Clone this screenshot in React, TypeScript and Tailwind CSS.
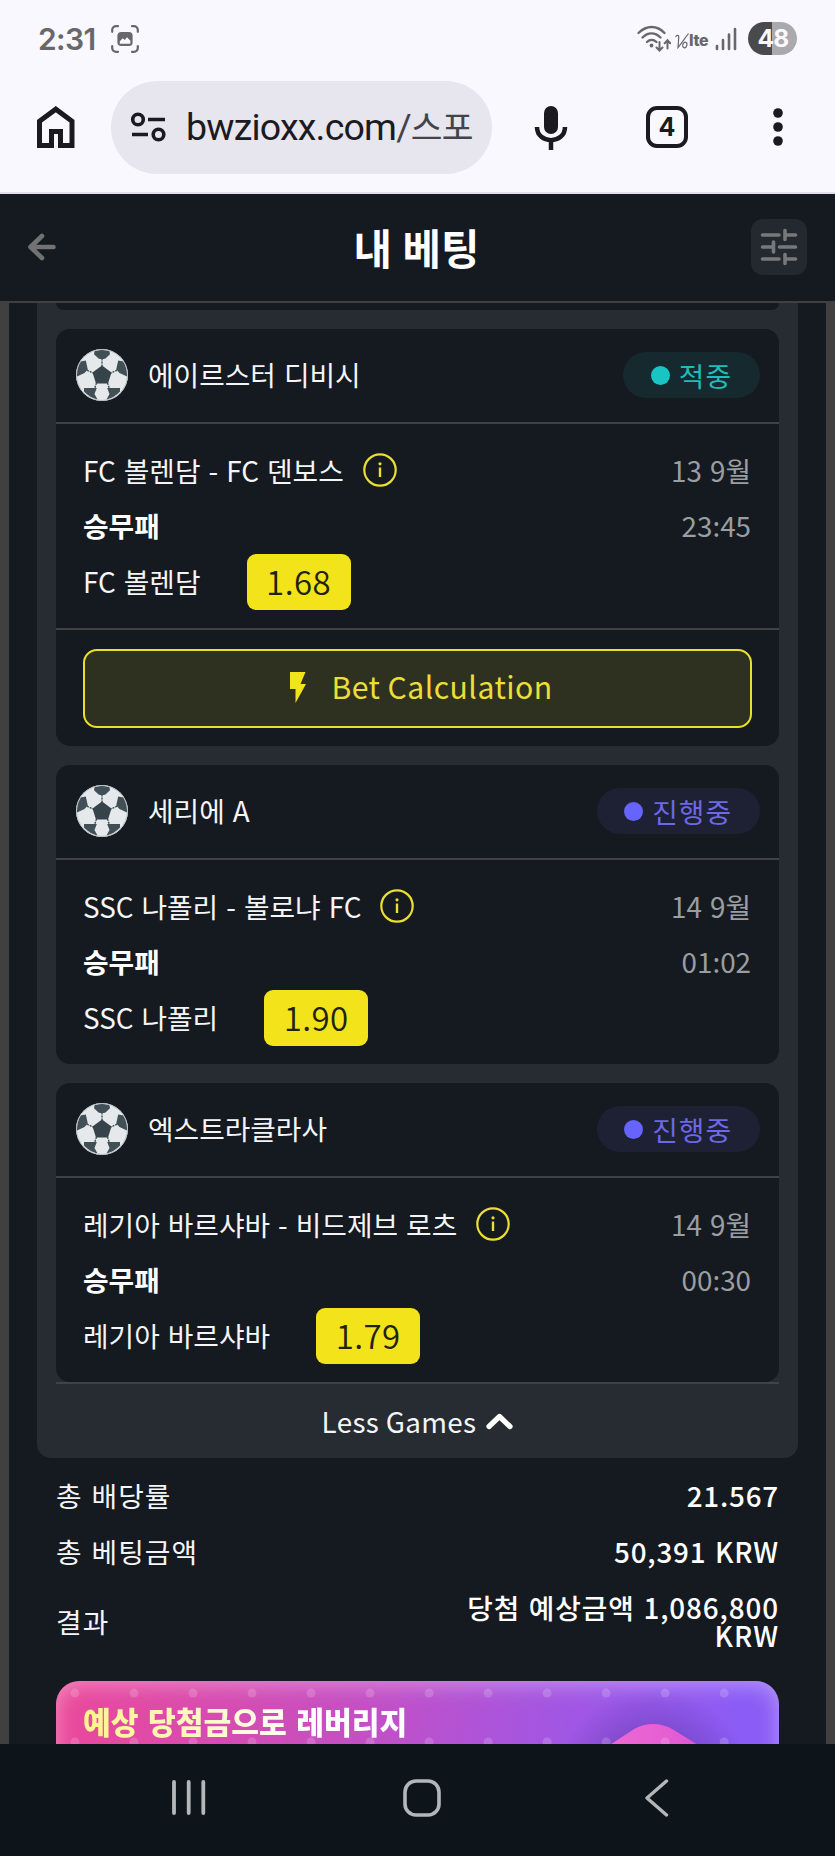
import React from "react";

type Status = "won" | "live";

interface Game {
  league: string;
  status: Status;
  match: string;
  pick: string;
  odds: string;
  date: string;
  time: string;
  calc?: boolean;
}

const games: Game[] = [
  { league: "에이르스터 디비시", status: "won", match: "FC 볼렌담 - FC 덴보스", pick: "FC 볼렌담", odds: "1.68", date: "13 9월", time: "23:45", calc: true },
  { league: "세리에 A", status: "live", match: "SSC 나폴리 - 볼로냐 FC", pick: "SSC 나폴리", odds: "1.90", date: "14 9월", time: "01:02" },
  { league: "엑스트라클라사", status: "live", match: "레기아 바르샤바 - 비드제브 로츠", pick: "레기아 바르샤바", odds: "1.79", date: "14 9월", time: "00:30" },
];

function StatusBar() {
  return (
    <div className="flex h-[79px] shrink-0 items-center pb-[2px] pl-[38px] pr-[38px] text-[#68686c]">
      <span className="w-[73px] whitespace-nowrap font-['Inter'] text-[30px] font-semibold leading-[38px] tracking-[-0.6px]">2:31</span>
      <svg className="h-[28px] w-[28px]" viewBox="0 0 28 28" fill="none" stroke="currentColor" strokeWidth="2.2" strokeLinecap="round">
        <path d="M1.200 6.800V5a3.800 3.800 0 0 1 3.800-3.800h2M21 1.200h2A3.800 3.800 0 0 1 26.800 5v1.800M26.800 21v2a3.800 3.800 0 0 1-3.800 3.800h-2M7 26.800H5A3.800 3.800 0 0 1 1.200 23v-2" />
        <rect x="7.500" y="8" width="13" height="12" rx="2.500" fill="currentColor" />
        <path d="M8.800 18.700v-2.400l3-3 2 1.800 2.200-2.800 3.400 3.500v2.900z" fill="#f9f8fe" stroke="none" />
      </svg>
      <div className="ml-auto flex items-center">
        <svg className="mr-[4px] h-[27px] w-[34px]" viewBox="0 0 34 27" fill="none" stroke="currentColor" strokeWidth="2.300" strokeLinecap="round">
          <path d="M1.500 8c8-8 18.500-8 26 0M5.500 12.500c5.500-5.500 12.500-5.500 18 0M10 17c2.800-2.800 6.500-2.800 9.500 0" />
          <circle cx="14.500" cy="20.500" r="1.900" fill="currentColor" stroke="none" />
          <path d="M22.500 17v8M19.500 22.500l3 3 3-3M30.500 23.500v-8M27.700 18.200l2.800-3 2.800 3" strokeWidth="2" />
        </svg>
        <span className="flex h-[20px] w-[40px] items-end whitespace-nowrap leading-[18px]">
          <svg className="h-[16px] w-[14px] shrink-0" viewBox="0 0 14 16" fill="none" stroke="currentColor" strokeWidth="1.200" strokeLinecap="round">
            <path d="M.8 3.500C2 2 3.800 2 3.800 4L3 14.500C6 11 10 5 13.200 1" />
            <ellipse cx="9.800" cy="12" rx="2" ry="2.800" transform="rotate(20 9.800 12)" />
          </svg>
          <span className="font-['Inter'] text-[16px] font-extrabold leading-[17px] tracking-[-0.300px]">lte</span>
        </span>
        <svg className="h-[24px] w-[22px]" viewBox="0 0 22 24" stroke="currentColor" strokeWidth="2.600" strokeLinecap="round">
          <path d="M2 19v3M8 13v9M14 7.500V22M20 2v20" />
        </svg>
        <span className="ml-[11px] flex h-[33px] w-[49px] items-center justify-center rounded-full bg-[linear-gradient(to_right,#4a4a4d_48%,#aaa9ae_48%)] pl-[1px] font-['Inter'] text-[24.500px] font-bold leading-[33px] tracking-[-0.8px] text-[#f9f8fe]">48</span>
      </div>
    </div>
  );
}

function BrowserBar() {
  return (
    <div className="flex h-[115px] shrink-0 border-b-2 border-[#e1e0eb] text-[#1b1a20]">
      <div className="flex h-[96px] w-full items-center pl-[37px]">
        <svg className="h-[42px] w-[38px]" viewBox="0 0 38 42" fill="none" stroke="currentColor" strokeWidth="5">
          <path d="M2.500 15.200 18.800 3.200 35 15.200V39.500H23.500V25.500H14.500V39.500H2.500z" />
        </svg>
        <div className="ml-[36px] flex h-[93px] w-[381px] items-center overflow-hidden rounded-full bg-[#e7e5ee] pl-[19px]">
          <svg className="h-[30px] w-[37px] shrink-0" viewBox="0 0 37 30" fill="none" stroke="currentColor" strokeWidth="3.600">
            <circle cx="8" cy="7.500" r="5.300" />
            <path d="M18 7.500H35M2 22.500H18" />
            <circle cx="28.500" cy="22.500" r="5.300" />
          </svg>
          <span className="ml-[19px] whitespace-nowrap font-['Roboto','Noto_Sans_CJK_KR',sans-serif] text-[37.500px] leading-[46px] tracking-[-0.800px]">
            bwzioxx.com<span className="text-[#44434b]">/<span className="text-[34.500px]">스포</span></span>
          </span>
        </div>
        <svg className="ml-[42px] h-[45px] w-[34px]" viewBox="0 0 34 45" fill="none" stroke="currentColor" strokeWidth="4.500">
          <rect x="10" y="1" width="14" height="28" rx="7" fill="currentColor" stroke="none" />
          <path d="M3 22c0 17.500 28 17.500 28 0M17 34v11" />
        </svg>
        <div className="ml-[78px] flex h-[42px] w-[42px] items-center justify-center rounded-[11px] border-[4.500px] border-current font-['Inter'] text-[25px] font-bold leading-none">4</div>
        <svg className="ml-[85px] h-[40px] w-[10px] overflow-visible" viewBox="0 0 10 40" fill="currentColor">
          <circle cx="5" cy="6" r="4.800" />
          <circle cx="5" cy="20" r="4.800" />
          <circle cx="5" cy="34" r="4.800" />
        </svg>
      </div>
    </div>
  );
}

function PageHeader() {
  return (
    <header className="flex h-[109px] shrink-0 items-center justify-between border-b-2 border-[#404040] bg-[#151a20] pb-[2px] pl-[27px] pr-[28px]">
      <svg className="mr-[25px] h-[30px] w-[30px]" viewBox="0 0 30 30" fill="none" stroke="#727272" strokeWidth="4.600" strokeLinecap="round" strokeLinejoin="round">
        <path d="M26.500 15H4M15 4 3.500 15 15 26" />
      </svg>
      <h1 className="whitespace-nowrap text-[41.800px] font-bold leading-[60px] text-white [word-spacing:1px]">내 베팅</h1>
      <div className="flex h-[56px] w-[56px] items-center justify-center rounded-[12px] bg-[#24292f]">
        <svg className="h-[38px] w-[38px]" viewBox="0 0 38 38" fill="none" stroke="#77787a" strokeWidth="3.600" strokeLinecap="round">
          <path d="M2.500 7H19M25 2.500v9M25 7h10.500M2.500 19H13.500M13.500 14v10M19.500 19h16M2.500 31H19M25 26.500v9M25 31h10.500" />
        </svg>
      </div>
    </header>
  );
}

function Football() {
  return (
    <svg className="h-[52px] w-[52px] shrink-0" viewBox="0 0 52 52">
      <circle cx="26" cy="26" r="26" fill="#e5e9eb" />
      <g fill="#414f56">
        <path d="M18.500 2.200Q26-.8 33.500 2.200L34 5.300 29.500 9.500Q26 10.500 22.500 9.500L18 5.300z" />
        <path d="M26 16.500 35.500 23.500 32 34.500H20L16.500 23.500z" fill="#37434b" />
        <path d="M4.500 12.500 9.800 11.500 11.800 20.500 8.500 24 1 27.500Q.3 19 4.500 12.500z" />
        <path d="M47.500 12.500 42.200 11.500 40.200 20.500 43.500 24 51 27.500Q51.700 19 47.500 12.500z" />
        <path d="M8 39H20.800L18.500 45 21.500 50.500Q13.500 48.500 8 42.500z" />
        <path d="M44 39H31.200L33.500 45 30.500 50.500Q38.500 48.500 44 42.500z" />
      </g>
      <g stroke="#414f56" strokeWidth="1.400" strokeDasharray="2 1" fill="none">
        <path d="M26 9.500V17M11 21.200 17 24M41 21.200 35 24M20.500 34 18.500 40M31.500 34l2 6" />
      </g>
      <circle cx="26" cy="26" r="25.500" fill="none" stroke="#b7bec2" strokeWidth="1" />
    </svg>
  );
}

function Badge({ status }: { status: Status }) {
  const won = status === "won";
  return (
    <span className={won ? "flex h-[46px] items-center gap-[9px] rounded-full bg-[#16292e] pl-[28px] pr-[28px] text-[#1fbdba]" : "flex h-[46px] items-center gap-[9px] rounded-full bg-[#1e2034] pl-[27px] pr-[28px] text-[#6c68e8]"}>
      <span className={won ? "h-[19px] w-[19px] rounded-full bg-[#18c5c5]" : "h-[19px] w-[19px] rounded-full bg-[#6663ff]"} />
      <span className="text-[27.800px] leading-[46px] tracking-[1px]">{won ? "적중" : "진행중"}</span>
    </span>
  );
}

function InfoIcon() {
  return (
    <svg className="ml-[19px] h-[34px] w-[34px]" viewBox="0 0 34 34" fill="none" stroke="#eade32" strokeWidth="2.200">
      <circle cx="17" cy="17" r="15.700" />
      <path d="M17 14.500v9.500" strokeWidth="2.400" />
      <circle cx="17" cy="10.800" r="1.600" fill="#eade32" stroke="none" />
    </svg>
  );
}

function GameCard({ game }: { game: Game }) {
  return (
    <article className="rounded-[14px] bg-[#151a20] text-[27.800px] text-[#f4f5f6] [word-spacing:1.800px]">
      <div className="flex h-[95px] items-center border-b-2 border-[#404243] pb-px pl-[20px] pr-[19px]">
        <Football />
        <span className="ml-[20px] mr-auto">{game.league}</span>
        <Badge status={game.status} />
      </div>
      <div className="flex h-[204px] justify-between px-[28px] pb-[18px] pt-[18px] leading-[56px]">
        <div className="-ml-px">
          <div className="flex h-[56px] items-center">
            {game.match}
            <InfoIcon />
          </div>
          <div className="h-[56px] font-bold leading-[55px] text-white">승무패</div>
          <div className="flex h-[56px] items-center">
            <span className="h-[56px] leading-[55px]">{game.pick}</span>
            <span className="ml-[46px] h-[56px] w-[104px] rounded-[9px] bg-[#f2e31b] text-center text-[33px] font-[350] leading-[55px] tracking-[0.400px] text-[#22230f]">{game.odds}</span>
          </div>
        </div>
        <div className="text-right text-[#9b9ea1]">
          <div className="h-[56px]">{game.date}</div>
          <div className="h-[55px] leading-[55px]">{game.time}</div>
        </div>
      </div>
      {game.calc && (
        <div className="h-[118px] border-t-2 border-[#404243] px-[27px] pt-[19px]">
          <button className="flex h-[79px] w-full items-center justify-center rounded-[14px] border-2 border-[#eadf30] bg-[#2f3120] pb-[3px] pl-[8px] text-[30.200px] tracking-[0.450px] text-[#ebdf35]">
            <svg className="mr-[25px] h-[31px] w-[16px]" viewBox="0 0 16 31" fill="#f2e31b">
              <path d="M0 0H15.500L10.500 12H16L5.500 31V17H0z" />
            </svg>
            Bet Calculation
          </button>
        </div>
      )}
    </article>
  );
}

function Summary() {
  return (
    <dl className="px-[19px] pb-[2px] pt-[10px] text-[27.800px] tracking-[1.100px] text-[#f4f5f6] [word-spacing:1.500px]">
      <div className="flex h-[56px] items-center justify-between">
        <dt>총 배당률</dt>
        <dd className="font-medium tracking-[0.800px] text-white">21.567</dd>
      </div>
      <div className="flex h-[56px] items-center justify-between">
        <dt>총 베팅금액</dt>
        <dd className="font-medium tracking-[0.800px] text-white">50,391 KRW</dd>
      </div>
      <div className="flex h-[83px] items-center justify-between">
        <dt>결과</dt>
        <dd className="pb-[2px] text-right font-medium leading-[28px] tracking-[0.900px] text-white">당첨 예상금액 1,086,800<br />KRW</dd>
      </div>
    </dl>
  );
}

const dotColumns = Array.from({ length: 12 }, (_, i) => 19 + i * 59.1);

function Banner() {
  return (
    <div className="relative mx-[19px] mt-[16px] h-[180px] overflow-hidden rounded-[23px] bg-[linear-gradient(100deg,#ec4899_0%,#c050c8_45%,#a855dd_62%,#8b5cf6_92%)]">
      <svg className="absolute inset-0 h-full w-full" viewBox="0 0 724 180">
        <defs>
          <radialGradient id="glow">
            <stop offset="0.350" stopColor="#4c2a8c" stopOpacity="0.450" />
            <stop offset="1" stopColor="#4c2a8c" stopOpacity="0" />
          </radialGradient>
          <linearGradient id="gem" x1="0" x2="1">
            <stop offset="0" stopColor="#f472d0" />
            <stop offset="1" stopColor="#d94fd6" />
          </linearGradient>
        </defs>
        <circle cx="598" cy="105" r="98" fill="url(#glow)" />
        <path d="M510 93 579 48Q598 38 617 48L690 93V170H510z" fill="url(#gem)" />
        {dotColumns.map((x) => (
          <g key={x} fill="#ffffff" fillOpacity="0.170">
            <circle cx={x} cy="12" r="4.500" />
            <circle cx={x} cy="61" r="4.500" />
          </g>
        ))}
      </svg>
      <div className="absolute inset-0 rounded-[23px] shadow-[inset_0_3px_22px_rgba(255,255,255,0.38)]" />
      <p className="relative ml-[27px] mt-[18px] w-fit whitespace-nowrap bg-[linear-gradient(90deg,#fdf58a,#fff6ba_30%,#ffffff_70%)] bg-clip-text text-[30.200px] font-black leading-[44px] text-transparent [word-spacing:2.500px]">예상 당첨금으로 레버리지</p>
    </div>
  );
}

function NavBar() {
  return (
    <nav className="flex h-[112px] shrink-0 items-start bg-[#0e151a] pl-[171px] pt-[35px]">
      <svg className="h-[37px] w-[35px]" viewBox="0 0 35 37" stroke="#b3b7ba" strokeWidth="3.800" strokeLinecap="round">
        <path d="M3 3v31M17.700 3v31M32.300 3v31" />
      </svg>
      <svg className="ml-[197px] h-[38px] w-[38px]" viewBox="0 0 38 38" fill="none" stroke="#b3b7ba" strokeWidth="3.600">
        <rect x="2" y="2" width="34" height="34" rx="11" />
      </svg>
      <svg className="ml-[203px] h-[38px] w-[26px]" viewBox="0 0 26 38" fill="none" stroke="#b3b7ba" strokeWidth="3.400" strokeLinecap="round" strokeLinejoin="round">
        <path d="M22.500 2 3 19 22.500 36" />
      </svg>
    </nav>
  );
}

export default function App() {
  return (
    <div className="flex h-[1856px] w-[835px] flex-col overflow-hidden bg-[#f9f8fe] font-['Noto_Sans_CJK_KR',sans-serif]">
      <StatusBar />
      <BrowserBar />
      <PageHeader />
      <main className="h-[1441px] shrink-0 overflow-hidden border-x-[9px] border-[#404040] bg-[#151a20] px-[28px]">
        <section className="rounded-b-[14px] bg-[#272b32] px-[19px]">
          <div className="h-[7px] rounded-b-[14px] bg-[#151a20]" />
          <div className="flex flex-col gap-[19px] pt-[19px]">
            {games.map((g) => (
              <GameCard key={g.league} game={g} />
            ))}
          </div>
          <button className="flex h-[76px] w-full items-center justify-center border-t-2 border-[#404243] pb-px pt-[2px] text-[27.800px] tracking-[0.350px] text-[#f4f5f6]">
            Less Games
            <svg className="ml-[10px] h-[17px] w-[27px]" viewBox="0 0 27 17" fill="none" stroke="#ffffff" strokeWidth="5.200" strokeLinecap="round" strokeLinejoin="round">
              <path d="M3 13.500 13.500 3.500 24 13.500" />
            </svg>
          </button>
        </section>
        <Summary />
        <Banner />
      </main>
      <NavBar />
    </div>
  );
}
